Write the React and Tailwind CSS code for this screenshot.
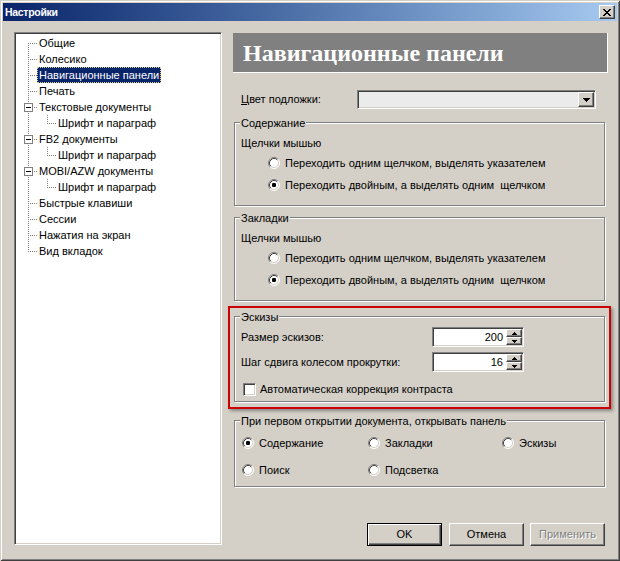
import React from "react";

const sunken =
  "border border-t-[#808080] border-l-[#808080] border-b-white border-r-white shadow-[inset_1px_1px_#404040,inset_-1px_-1px_#d4d0c8]";
const raised =
  "border border-t-white border-l-white border-b-[#404040] border-r-[#404040] shadow-[inset_-1px_-1px_#808080,inset_1px_1px_#d4d0c8]";
const etched = "border border-[#808080] shadow-[inset_1px_1px_#fff,1px_1px_#fff]";

function Radio({ checked }) {
  return (
    <svg width="12" height="12" viewBox="0 0 12 12" className="shrink-0">
      <circle cx="6" cy="6" r="5" fill="#fff" />
      <path d="M2.11 9.89A5.5 5.5 0 0 1 9.89 2.11" stroke="#808080" fill="none" />
      <path d="M9.89 2.11A5.5 5.5 0 0 1 2.11 9.89" stroke="#fff" fill="none" />
      <path d="M2.82 9.18A4.5 4.5 0 0 1 9.18 2.82" stroke="#404040" fill="none" />
      <path d="M9.18 2.82A4.5 4.5 0 0 1 2.82 9.18" stroke="#d4d0c8" fill="none" />
      {checked && <rect x="4" y="4" width="4" height="4" rx="1.2" fill="#000" />}
    </svg>
  );
}

function Check() {
  return <div className={`w-[13px] h-[13px] shrink-0 bg-white ${sunken}`} />;
}

function UpArrow() {
  return (
    <svg width="5" height="3" viewBox="0 0 5 3" shapeRendering="crispEdges">
      <path d="M2 0h1v1h1v1h1v1H0V2h1V1h1z" fill="#000" />
    </svg>
  );
}
function DownArrow() {
  return (
    <svg width="5" height="3" viewBox="0 0 5 3" shapeRendering="crispEdges">
      <path d="M0 0h5v1H4v1H3v1H2V2H1V1H0z" fill="#000" />
    </svg>
  );
}

function Spin({ value }) {
  return (
    <div className={`w-[92px] h-[20px] flex bg-white ${sunken} p-[1px]`}>
      <div className="flex-1 text-right pr-[3px] leading-[16px]">{value}</div>
      <div className="w-[16px] flex flex-col">
        <div className={`h-[8px] bg-[#d4d0c8] ${raised} flex items-center justify-center`}>
          <UpArrow />
        </div>
        <div className={`h-[8px] bg-[#d4d0c8] ${raised} flex items-center justify-center`}>
          <DownArrow />
        </div>
      </div>
    </div>
  );
}

function Group({ title, className, children }) {
  return (
    <div className={`${etched} flex flex-col ${className}`}>
      <div className="-mt-[6px] ml-[5px] self-start px-[1px] bg-[#d4d0c8] h-[13px] leading-[13px] whitespace-nowrap">
        {title}
      </div>
      {children}
    </div>
  );
}

function TreeLines({ type, first, last }) {
  const w = type === "child" ? 35 : 16;
  return (
    <svg width={w} height="16" viewBox={`0 0 ${w} 16`} className="shrink-0" shapeRendering="crispEdges">
      <line x1="7.5" y1={first ? 8 : 0} x2="7.5" y2={last ? 9 : 16} stroke="#808080" strokeDasharray="1 1" />
      {type !== "child" && (
        <line x1="9" y1="8.5" x2="16" y2="8.5" stroke="#808080" strokeDasharray="1 1" />
      )}
      {type === "parent" && (
        <g>
          <rect x="3.5" y="4.5" width="8" height="8" fill="#fff" stroke="#808080" />
          <line x1="5" y1="8.5" x2="10" y2="8.5" stroke="#000" />
        </g>
      )}
      {type === "child" && (
        <g>
          <line x1="26.5" y1="0" x2="26.5" y2="9" stroke="#808080" strokeDasharray="1 1" />
          <line x1="28" y1="8.5" x2="35" y2="8.5" stroke="#808080" strokeDasharray="1 1" />
        </g>
      )}
    </svg>
  );
}

const treeItems = [
  { label: "Общие", type: "leaf", first: true },
  { label: "Колесико", type: "leaf" },
  { label: "Навигационные панели", type: "leaf", selected: true },
  { label: "Печать", type: "leaf" },
  { label: "Текстовые документы", type: "parent" },
  { label: "Шрифт и параграф", type: "child" },
  { label: "FB2 документы", type: "parent" },
  { label: "Шрифт и параграф", type: "child" },
  { label: "MOBI/AZW документы", type: "parent" },
  { label: "Шрифт и параграф", type: "child" },
  { label: "Быстрые клавиши", type: "leaf" },
  { label: "Сессии", type: "leaf" },
  { label: "Нажатия на экран", type: "leaf" },
  { label: "Вид вкладок", type: "leaf", last: true },
];

function Tree() {
  return (
    <div className={`mt-[11px] ml-[11px] w-[208px] h-[513px] bg-white ${sunken} pt-[2px] pl-[6px] flex flex-col`}>
      {treeItems.map((it, i) => (
        <div key={i} className="h-[16px] flex items-center">
          <TreeLines type={it.type} first={it.first} last={it.last} />
          <div
            className={
              it.selected
                ? "h-[16px] leading-[16px] px-[2px] whitespace-nowrap bg-[#0a246a] text-white outline-1 outline-dotted outline-[#d8d090] -outline-offset-1"
                : "h-[16px] leading-[16px] px-[2px] whitespace-nowrap"
            }
          >
            {it.label}
          </div>
        </div>
      ))}
    </div>
  );
}

function RadioRow({ checked, children, className }) {
  return (
    <div className={`flex items-center ${className}`}>
      <Radio checked={checked} />
      <span className="ml-[5px] whitespace-nowrap">{children}</span>
    </div>
  );
}

function ClickGroup({ title, className }) {
  return (
    <Group title={title} className={`h-[84px] w-[371px] ml-[1px] ${className}`}>
      <div className="mt-[3px] h-[20px] flex items-center pl-[6px]">Щелчки мышью</div>
      <RadioRow className="h-[20px] pl-[33px]">Переходить одним щелчком, выделять указателем</RadioRow>
      <RadioRow checked className="h-[24px] pl-[33px]">
        Переходить двойным, а выделять одним&nbsp; щелчком
      </RadioRow>
    </Group>
  );
}

function Button({ children, def, disabled }) {
  const base = "w-[75px] h-[23px] bg-[#d4d0c8] flex items-center justify-center";
  if (def)
    return (
      <div className={`${base} border border-black shadow-[inset_1px_1px_#fff,inset_-1px_-1px_#404040,inset_-2px_-2px_#808080]`}>
        {children}
      </div>
    );
  return (
    <div className={`${base} ${raised} ${disabled ? "text-[#808080] [text-shadow:1px_1px_#fff]" : ""}`}>
      {children}
    </div>
  );
}

export default function App() {
  return (
    <div className="w-[620px] h-[561px] bg-[#d4d0c8] p-[3px] flex flex-col font-['Liberation_Sans',Arial,sans-serif] text-[11px] text-black shadow-[inset_1px_1px_#d4d0c8,inset_-1px_-1px_#404040,inset_2px_2px_#fff,inset_-2px_-2px_#808080]">
      {/* Title bar */}
      <div className="h-[18px] shrink-0 bg-linear-to-r from-[#0a246a] to-[#a6caf0] flex items-center justify-between pl-[2px] pr-[2px]">
        <span className="text-white font-bold text-[10.5px] tracking-[-0.3px] leading-[18px]">Настройки</span>
        <div className={`w-[16px] h-[14px] bg-[#d4d0c8] ${raised} flex items-center justify-center`}>
          <svg width="8" height="7" viewBox="0 0 8 7" shapeRendering="crispEdges">
            <path
              d="M0 0h2v1h1v1h2V1h1V0h2v1H7v1H6v1H5v1h1v1h1v1h1v1H6V6H5V5H3v1H2v1H0V6h1V5h1V4h1V3H2V2H1V1H0z"
              fill="#000"
            />
          </svg>
        </div>
      </div>

      <div className="flex flex-1">
        <Tree />

        {/* Right column */}
        <div className="ml-[11px] mt-[12px] w-[375px] flex flex-col">
          <div className="h-[40px] bg-[#808080] border-r border-b border-white flex items-center pl-[10px]">
            <span className="text-white font-bold text-[24px] leading-[28px] font-['Liberation_Serif','Times_New_Roman',serif]">
              Навигационные панели
            </span>
          </div>

          <div className="mt-[17px] h-[19px] flex items-center">
            <span className="w-[124px] pl-[8px]">
              <span className="underline">Ц</span>вет подложки:
            </span>
            <div className={`w-[239px] h-[19px] bg-[#ebebeb] ${sunken} flex items-center justify-end pr-[1px]`}>
              <div className={`w-[16px] h-[15px] bg-[#d4d0c8] ${raised} flex items-center justify-center`}>
                <svg width="7" height="4" viewBox="0 0 7 4" shapeRendering="crispEdges">
                  <path d="M0 0h7v1H6v1H5v1H4v1H3V3H2V2H1V1H0z" fill="#000" />
                </svg>
              </div>
            </div>
          </div>

          <ClickGroup title="Содержание" className="mt-[13px]" />
          <ClickGroup title="Закладки" className="mt-[11px]" />

          {/* Highlighted thumbnails group */}
          <div className="mt-[5px] -ml-[5px] w-[383px] border-2 border-[#cc0000] pt-[8px] pl-[4px] pb-[5px] shadow-[2px_2px_3px_rgba(0,0,0,0.35)]">
            <Group title="Эскизы" className="h-[86px] w-[371px]">
              <div className="mt-[3px] h-[20px] flex items-center pl-[6px]">
                <span className="w-[191px]">Размер эскизов:</span>
                <Spin value="200" />
              </div>
              <div className="mt-[5px] h-[20px] flex items-center pl-[6px]">
                <span className="w-[191px]">Шаг сдвига колесом прокрутки:</span>
                <Spin value="16" />
              </div>
              <div className="mt-[8px] h-[19px] flex items-center pl-[8px]">
                <Check />
                <span className="ml-[4px]">Автоматическая коррекция контраста</span>
              </div>
            </Group>
          </div>

          <Group title="При первом открытии документа, открывать панель" className="mt-[11px] ml-[1px] h-[67px] w-[371px]">
            <div className="mt-[5px] h-[20px] flex items-center pl-[7px]">
              <RadioRow checked className="w-[126px]">Содержание</RadioRow>
              <RadioRow className="w-[134px]">Закладки</RadioRow>
              <RadioRow>Эскизы</RadioRow>
            </div>
            <div className="mt-[7px] h-[20px] flex items-center pl-[7px]">
              <RadioRow className="w-[126px]">Поиск</RadioRow>
              <RadioRow>Подсветка</RadioRow>
            </div>
          </Group>

          <div className="mt-[36px] flex justify-end pr-[3px]">
            <Button def>OK</Button>
            <div className="ml-[7px]">
              <Button>Отмена</Button>
            </div>
            <div className="ml-[6px]">
              <Button disabled>Применить</Button>
            </div>
          </div>
        </div>
      </div>
    </div>
  );
}
